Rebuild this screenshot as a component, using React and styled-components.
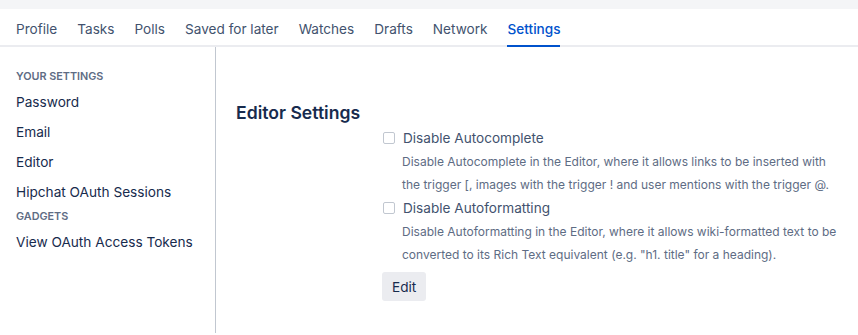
import React from 'react';
import styled, { createGlobalStyle } from 'styled-components';

const GlobalStyle = createGlobalStyle`
  html, body {
    margin: 0;
    padding: 0;
    background: #fff;
    font-family: Inter, "Liberation Sans", Arial, sans-serif;
    color: #172b4d;
  }
`;

const Page = styled.div`
  display: flex;
  flex-direction: column;
  height: 333px;
`;

const TopStrip = styled.div`
  height: 9px;
  background: #f4f5f7;
`;

const Tabs = styled.nav`
  display: flex;
  padding: 0 6px;
  border-bottom: 2px solid #ebecf0;
  height: 36px;
`;

const Tab = styled.a`
  display: flex;
  align-items: center;
  margin: 0 10px -2px;
  padding-top: 3px;
  font-size: 13.6px;
  color: ${p => (p.active ? '#0052cc' : '#42526e')};
  font-weight: ${p => (p.active ? 500 : 400)};
  text-decoration: none;
  border-bottom: 2px solid ${p => (p.active ? '#0052cc' : 'transparent')};
  cursor: pointer;
`;

const Body = styled.div`
  flex: 1;
  display: flex;
`;

const Sidebar = styled.aside`
  width: 216px;
  flex-shrink: 0;
  box-sizing: border-box;
  border-right: 1px solid #c1c7d0;
  padding: 20px 16px 0;
`;

const SideHeading = styled.div`
  height: 20px;
  line-height: 20px;
  font-size: 10.8px;
  font-weight: 600;
  text-transform: uppercase;
  color: #5e6c84;
`;

const SideLink = styled.a`
  display: block;
  height: 30px;
  line-height: 30px;
  font-size: 13.65px;
  color: #172b4d;
  text-decoration: none;
`;

const Content = styled.main`
  flex: 1;
  padding: 54px 0 0 20px;
`;

const Heading = styled.h2`
  margin: 0 0 1px;
  font-size: 17.6px;
  line-height: 24px;
  font-weight: 600;
  color: #172b4d;
`;

const Form = styled.div`
  padding-left: 146px;
  max-width: 456px;
`;

const CheckRow = styled.label`
  display: flex;
  align-items: center;
  height: 24px;
  font-size: 13.6px;
  color: #42526e;
`;

const Box = styled.span`
  width: 10px;
  height: 10px;
  border: 1px solid #c1c7d0;
  border-radius: 2px;
  background: #fff;
  margin: 0 8px 0 1px;
`;

const Description = styled.p`
  margin: 0;
  padding-left: 20px;
  font-size: 12px;
  line-height: 23px;
  color: #5e6c84;
`;

const Button = styled.button`
  margin-top: 6px;
  height: 29px;
  padding: 0 10px;
  border: none;
  border-radius: 3px;
  background: #ebecf0;
  font-family: inherit;
  font-size: 13.6px;
  color: #172b4d;
`;

const tabs = ['Profile', 'Tasks', 'Polls', 'Saved for later', 'Watches', 'Drafts', 'Network', 'Settings'];

const options = [
  {
    label: 'Disable Autocomplete',
    text: 'Disable Autocomplete in the Editor, where it allows links to be inserted with the trigger [, images with the trigger ! and user mentions with the trigger @.',
  },
  {
    label: 'Disable Autoformatting',
    text: 'Disable Autoformatting in the Editor, where it allows wiki-formatted text to be converted to its Rich Text equivalent (e.g. "h1. title" for a heading).',
  },
];

export default function App() {
  return (
    <>
      <GlobalStyle />
      <Page>
        <TopStrip />
        <Tabs>
          {tabs.map(t => (
            <Tab key={t} active={t === 'Settings'}>{t}</Tab>
          ))}
        </Tabs>
        <Body>
          <Sidebar>
            <SideHeading>Your Settings</SideHeading>
            <SideLink>Password</SideLink>
            <SideLink>Email</SideLink>
            <SideLink>Editor</SideLink>
            <SideLink>Hipchat OAuth Sessions</SideLink>
            <SideHeading>Gadgets</SideHeading>
            <SideLink>View OAuth Access Tokens</SideLink>
          </Sidebar>
          <Content>
            <Heading>Editor Settings</Heading>
            <Form>
              {options.map(o => (
                <div key={o.label}>
                  <CheckRow>
                    <Box />
                    {o.label}
                  </CheckRow>
                  <Description>{o.text}</Description>
                </div>
              ))}
              <Button>Edit</Button>
            </Form>
          </Content>
        </Body>
      </Page>
    </>
  );
}
